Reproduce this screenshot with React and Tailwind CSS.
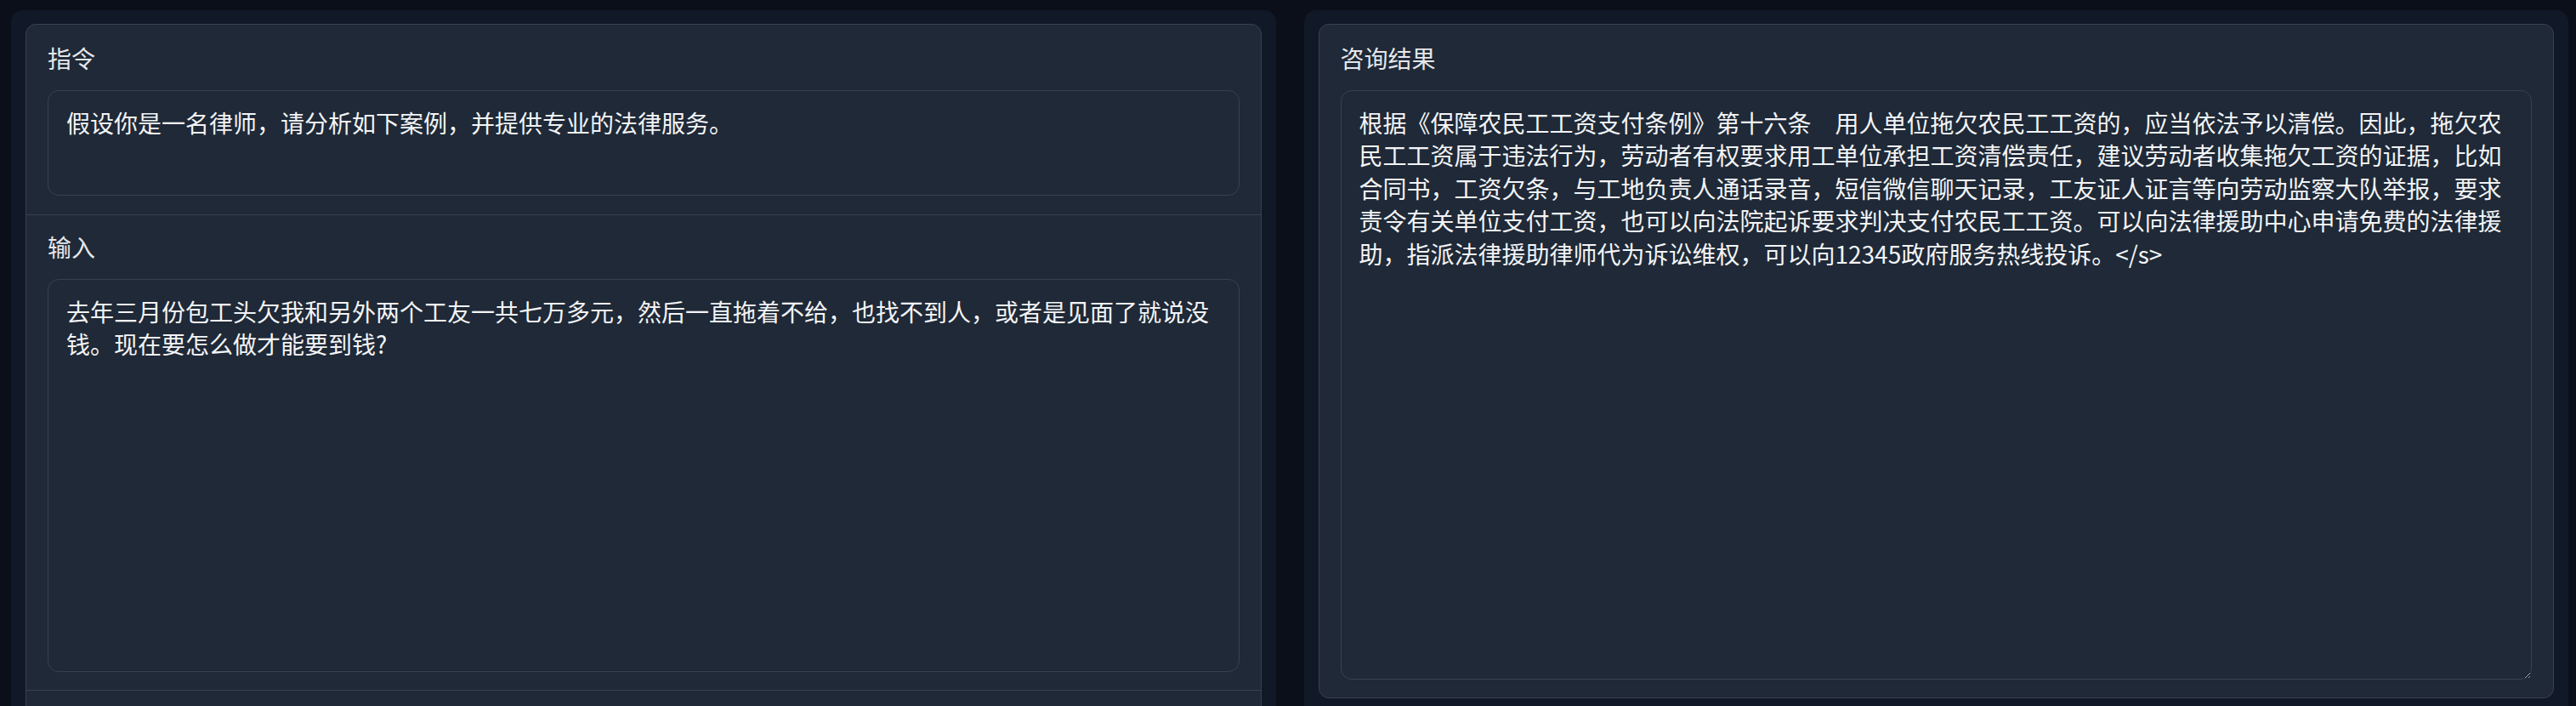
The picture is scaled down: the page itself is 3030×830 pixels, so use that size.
import React from "react";

const instruction = "假设你是一名律师，请分析如下案例，并提供专业的法律服务。";
const question =
  "去年三月份包工头欠我和另外两个工友一共七万多元，然后一直拖着不给，也找不到人，或者是见面了就说没钱。现在要怎么做才能要到钱?";
const answer =
  "根据《保障农民工工资支付条例》第十六条　用人单位拖欠农民工工资的，应当依法予以清偿。因此，拖欠农民工工资属于违法行为，劳动者有权要求用工单位承担工资清偿责任，建议劳动者收集拖欠工资的证据，比如合同书，工资欠条，与工地负责人通话录音，短信微信聊天记录，工友证人证言等向劳动监察大队举报，要求责令有关单位支付工资，也可以向法院起诉要求判决支付农民工工资。可以向法律援助中心申请免费的法律援助，指派法律援助律师代为诉讼维权，可以向12345政府服务热线投诉。</s>";

function Field({ label, value, pad, height, resizable }) {
  return (
    <div className={`px-[25px] ${pad}`}>
      <div className="mb-[19px] text-[28px] leading-[38px] text-[#e5e7eb]">{label}</div>
      <textarea
        readOnly
        value={value}
        className={
          resizable
            ? "block w-full rounded-[13px] border border-[#374151] bg-[#1f2937] px-[21px] pt-[18px] text-[28px] leading-[38.4px] text-[#f3f4f6] outline-none [color-scheme:dark] font-['Noto_Sans_CJK_SC',sans-serif] " + height
            : "block w-full resize-none overflow-hidden rounded-[13px] border border-[#374151] bg-[#1f2937] px-[21px] pt-[18px] text-[28px] leading-[38.4px] text-[#f3f4f6] outline-none font-['Noto_Sans_CJK_SC',sans-serif] " + height
        }
      />
    </div>
  );
}

export default function App() {
  return (
    <div className="flex min-h-screen gap-[33px] bg-[#0b0f19] pt-[12px] pl-[13px] pr-[9px] font-['Noto_Sans_CJK_SC',sans-serif]">
      {/* left column: instruction + input */}
      <div className="flex-1 rounded-[14px] bg-[#111827] px-[17px] pt-[16px] pb-[16px]">
        <div className="rounded-[12px] border border-[#374151] bg-[#1f2937]">
          <Field label="指令" value={instruction} pad="pt-[20px] pb-[22px]" height="h-[124px]" />
          <div className="border-t border-[#374151]">
            <Field label="输入" value={question} pad="pt-[18px] pb-[21px]" height="h-[462px]" />
          </div>
          <div className="h-[100px] border-t border-[#374151]" />
        </div>
      </div>

      {/* right column: result */}
      <div className="flex-1 rounded-[14px] bg-[#111827] px-[17px] pt-[16px] pb-[16px]">
        <div className="rounded-[12px] border border-[#374151] bg-[#1f2937]">
          <Field label="咨询结果" value={answer} pad="pt-[20px] pb-[21px]" height="h-[693px]" resizable />
        </div>
      </div>
    </div>
  );
}
